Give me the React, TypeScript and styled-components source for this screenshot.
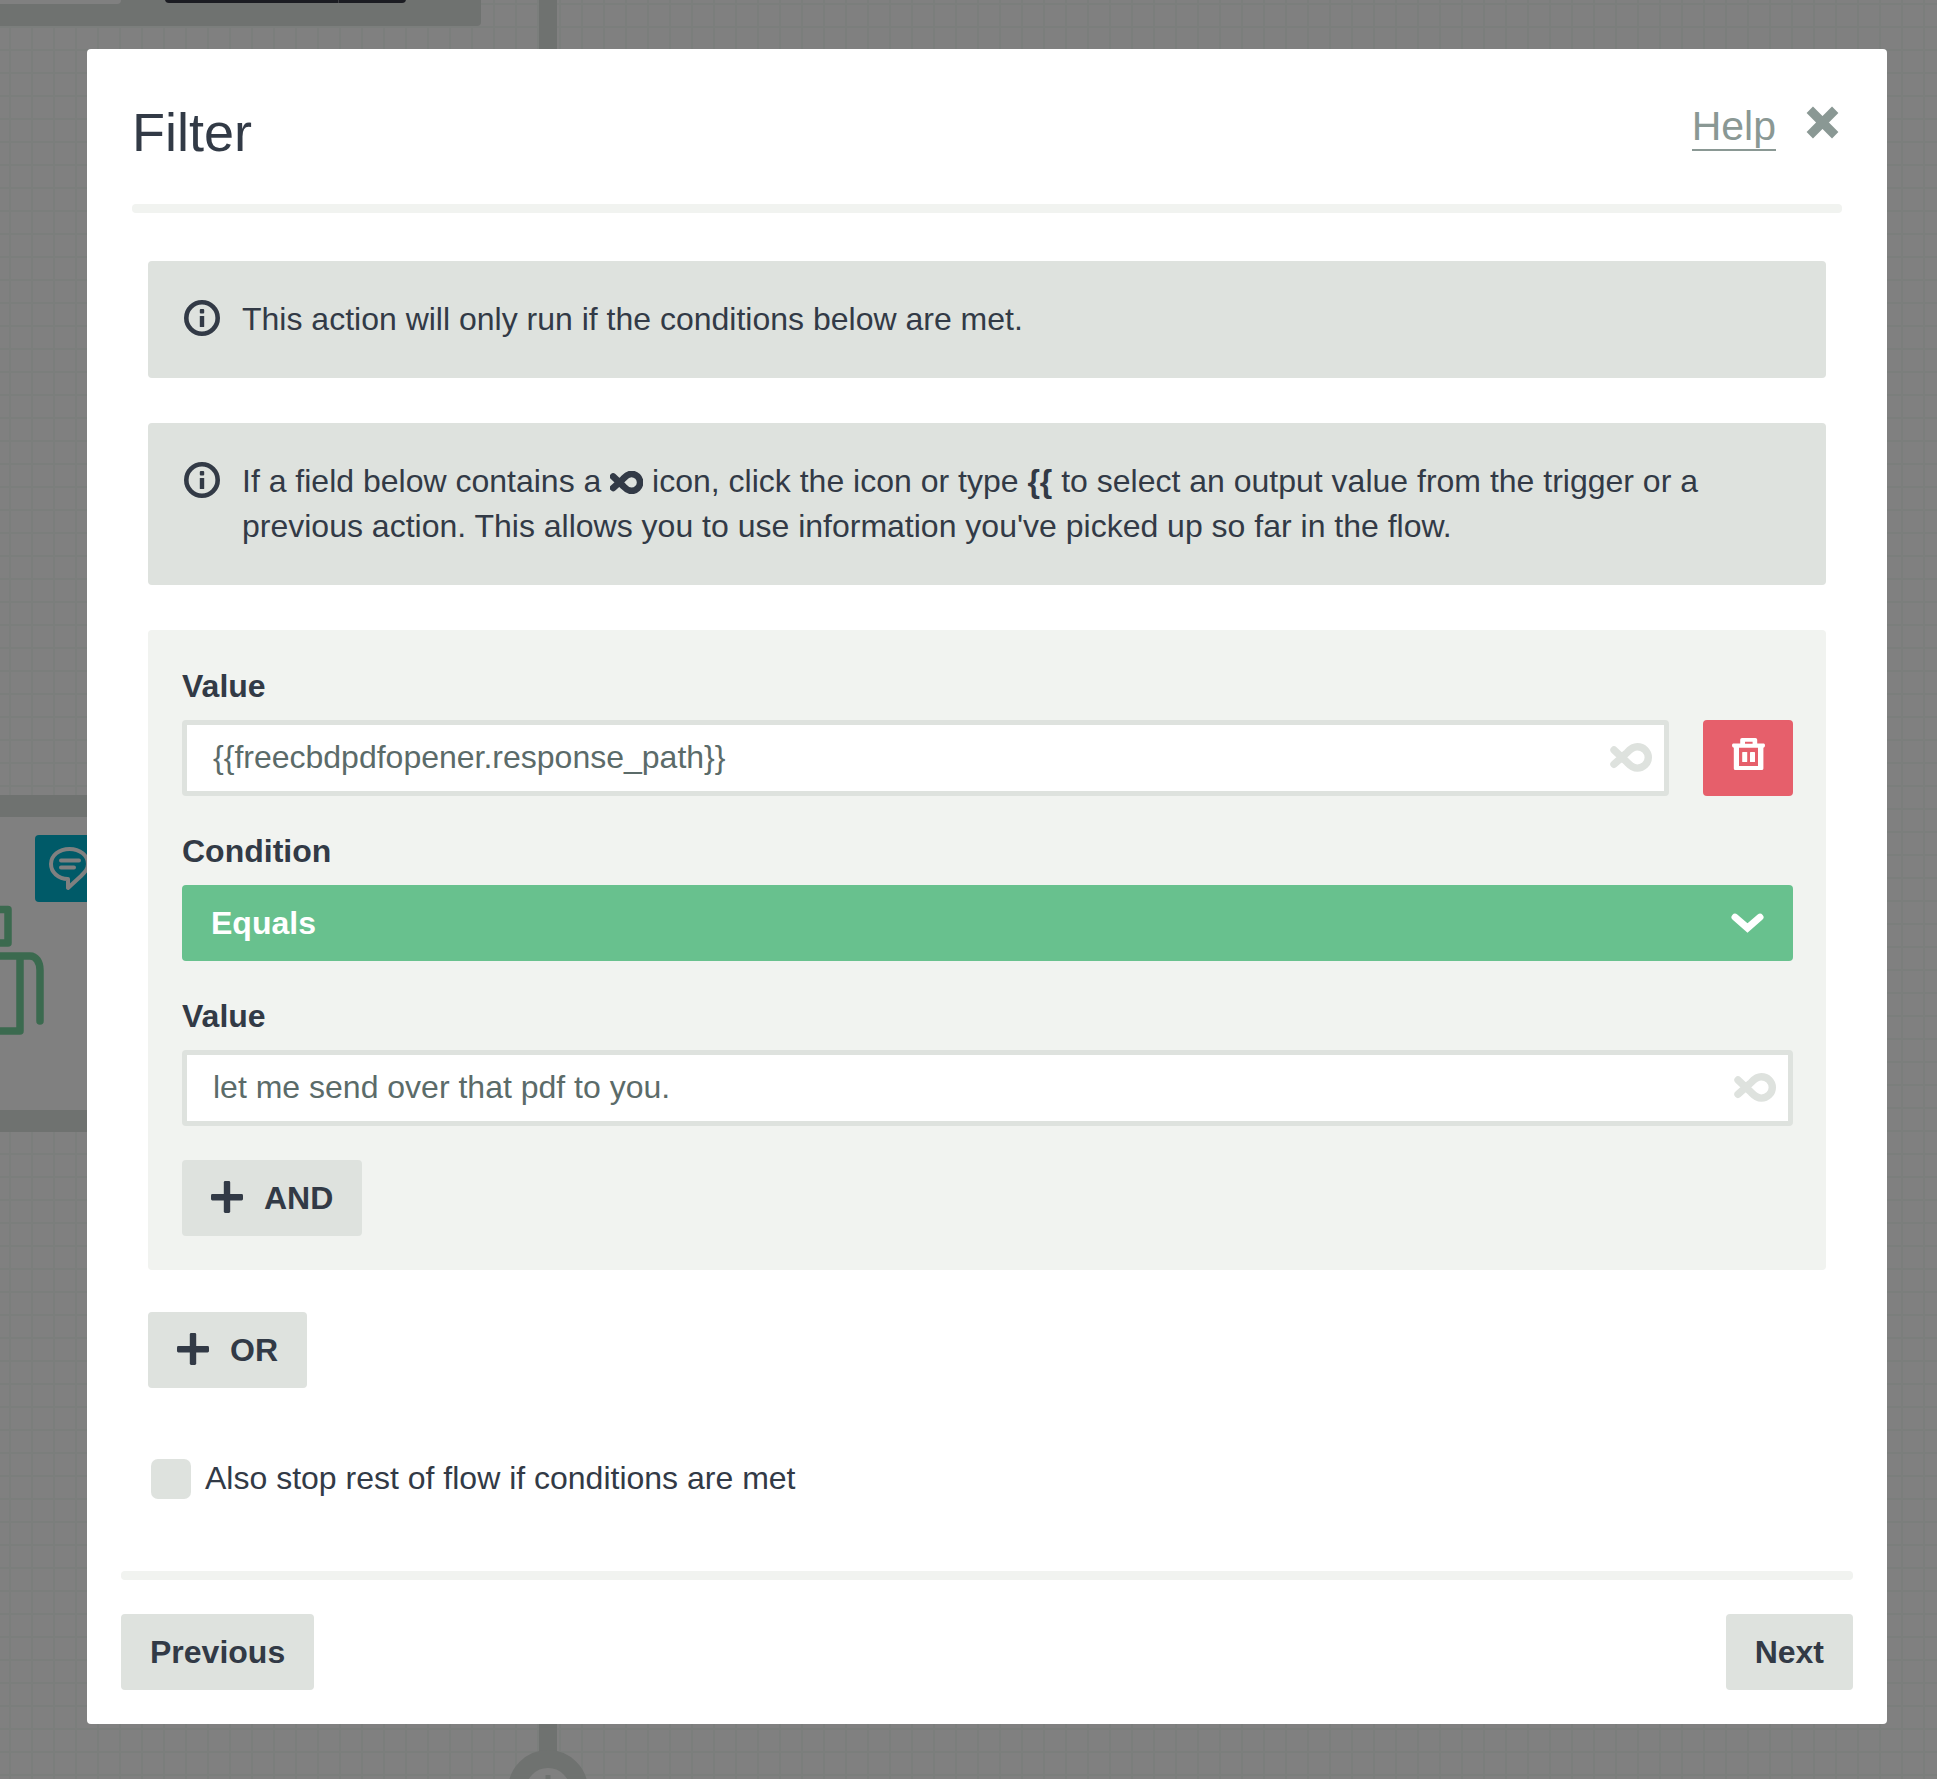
import React, { useState } from "react";
import styled, { createGlobalStyle } from "styled-components";

const ink = "#323a46";
const muted = "#8a9894";
const soft = "#dee2de";
const pale = "#f1f3f0";

const GlobalStyle = createGlobalStyle`
  *, *::before, *::after { box-sizing: border-box; }
  body {
    margin: 0;
    font-family: "Liberation Sans", Arial, sans-serif;
    font-size: 32px;
    line-height: 45px;
    color: ${ink};
    background: #808080;
  }
`;

const Page = styled.div`
  position: relative;
  display: flow-root;
  min-height: 100vh;
`;

/* Dimmed flow builder behind the dialog */
const Canvas = styled.div`
  position: absolute;
  inset: 0;
  overflow: hidden;
  background-color: #808080;
  background-image: linear-gradient(to right, #7b7e7c 2px, transparent 2px),
    linear-gradient(to bottom, #7b7e7c 2px, transparent 2px);
  background-size: 22px 23px;
  background-position: 9px 3px;
`;

const Connector = styled.div`
  position: absolute;
  left: 539px;
  top: 0;
  width: 18px;
  height: 1760px;
  background: #6f7270;
`;

const TopNode = styled.div`
  position: absolute;
  left: -20px;
  top: -200px;
  width: 501px;
  height: 226px;
  border-radius: 4px;
  background: #6f7270;
`;

const TopCard = styled.div`
  position: absolute;
  left: 0;
  bottom: 22px;
  width: 141px;
  height: 100px;
  border-radius: 4px;
  background: #808080;
`;

const TopAction = styled.div`
  position: absolute;
  left: 185px;
  bottom: 23px;
  display: flex;
  width: 241px;
  height: 76px;
  border-radius: 4px;
  background: #1b1c22;

  &::before {
    content: "";
    width: 174px;
    border-right: 1px solid #3c3d42;
  }
`;

const SideNode = styled.div`
  position: absolute;
  left: -22px;
  top: 795px;
  width: 300px;
  height: 337px;
  border: 22px solid #6f7270;
  border-radius: 4px;
  background: #808080;
`;

const Badge = styled.div`
  position: absolute;
  left: 35px;
  top: 18px;
  width: 68px;
  height: 67px;
  border-radius: 4px;
  background: #005a68;
`;

const Robot = styled.svg`
  position: absolute;
  left: 0;
  top: 80px;
`;

const AddStep = styled.svg`
  position: absolute;
  left: 508px;
  top: 1750px;
`;

const Dialog = styled.main`
  position: relative;
  margin: 49px 50px 55px 87px;
  padding: 55px 0 34px;
  border-radius: 4px;
  background: #fff;
`;

const Header = styled.header`
  display: flex;
  justify-content: space-between;
  align-items: flex-start;
  margin: 0 45px;
  padding-bottom: 44px;
`;

const Title = styled.h1`
  margin: 0;
  font-size: 54px;
  line-height: 56px;
  font-weight: 400;
`;

const HeaderActions = styled.div`
  display: flex;
  align-items: flex-start;
  gap: 30px;
  padding-right: 3px;
`;

const HelpLink = styled.a`
  font-size: 41px;
  line-height: 45px;
  color: ${muted};
  text-decoration: none;
  border-bottom: 2px solid ${muted};
`;

const IconButton = styled.button`
  display: flex;
  padding: 0;
  border: 0;
  background: none;
  color: inherit;
  cursor: pointer;
`;

const CloseButton = styled(IconButton)`
  padding-top: 2px;
  color: ${muted};
`;

const Divider = styled.hr<{ $inset: number }>`
  height: 9px;
  margin: 0 ${(p) => p.$inset}px;
  border: 0;
  border-radius: 4px;
  background: ${pale};
`;

const Body = styled.div`
  display: flex;
  flex-direction: column;
  gap: 45px;
  padding: 48px 61px 70px;
`;

const Notice = styled.div`
  display: flex;
  align-items: flex-start;
  gap: 22px;
  padding: 36px;
  border-radius: 4px;
  background: ${soft};

  > svg {
    flex: none;
    margin-top: 3px;
  }

  p {
    margin: 0;
  }
`;

const Rules = styled.div`
  display: flex;
  flex-direction: column;
  align-items: flex-start;
  gap: 42px;
`;

const Panel = styled.section`
  display: flex;
  flex-direction: column;
  align-items: flex-start;
  align-self: stretch;
  gap: 34px;
  padding: 34px 33px 34px 34px;
  border-radius: 4px;
  background: ${pale};
`;

const Fields = styled.div`
  display: flex;
  flex-direction: column;
  align-self: stretch;
  gap: 33px;
`;

const Field = styled.div`
  display: flex;
  flex-direction: column;
  gap: 11px;
`;

const Label = styled.label`
  font-weight: 700;
`;

const Row = styled.div`
  display: flex;
  gap: 34px;
`;

const InputBox = styled.div`
  display: flex;
  flex: 1;
  align-items: center;
  height: 76px;
  padding: 0 12px 2px 0;
  border: 5px solid ${soft};
  border-radius: 4px;
  background: #fff;
  color: ${soft};
`;

const TextInput = styled.input`
  flex: 1;
  min-width: 0;
  height: 64px;
  padding: 0 26px;
  border: 0;
  outline: 0;
  background: none;
  font: inherit;
  color: #5b6b69;
`;

const DeleteButton = styled(IconButton)`
  flex: none;
  justify-content: center;
  width: 90px;
  height: 76px;
  padding-top: 18px;
  border-radius: 4px;
  background: #e65f6b;
  color: #fff;
`;

const SelectBox = styled.div`
  display: grid;
  align-items: center;
  border-radius: 4px;
  background: #68c18e;
  color: #fff;

  > * {
    grid-area: 1 / 1;
  }

  > svg {
    justify-self: end;
    margin-right: 29px;
    pointer-events: none;
  }
`;

const Select = styled.select`
  width: 100%;
  height: 76px;
  padding: 0 29px;
  border: 0;
  outline: 0;
  appearance: none;
  background: none;
  font: inherit;
  font-weight: 700;
  color: inherit;
`;

const Button = styled.button`
  display: flex;
  align-items: center;
  gap: 21px;
  height: 76px;
  padding: 0 29px;
  border: 0;
  border-radius: 4px;
  background: ${soft};
  font: inherit;
  font-weight: 700;
  color: ${ink};
  cursor: pointer;
`;

const Outside = styled.div`
  display: flex;
  flex-direction: column;
  align-items: flex-start;
  gap: 68px;
`;

const CheckLabel = styled.label`
  display: flex;
  align-items: center;
  gap: 14px;
  padding-left: 3px;
`;

const Checkbox = styled.input`
  width: 40px;
  height: 40px;
  margin: 0;
  appearance: none;
  border-radius: 7px;
  background: ${soft};

  &:checked {
    background: #68c18e;
  }
`;

const Footer = styled.footer`
  display: flex;
  justify-content: space-between;
  padding: 34px 34px 0;
`;

const InlineIcon = styled.span`
  svg {
    vertical-align: -2px;
  }
`;

const VariableIcon = ({ width = 42, height = 29, stroke = 7.4 }: { width?: number; height?: number; stroke?: number }) => (
  <svg width={width} height={height} viewBox="0 0 42 29" fill="none" preserveAspectRatio="none" aria-hidden="true">
    <path
      d="M4 21.3 16 10.6C18.800 8 21.500 3.7 27.3 3.7 33.4 3.7 38.3 8.5 38.3 14.4S33.4 25.1 27.3 25.1C21.500 25.1 18.800 20.800 16 18.2L4 7"
      stroke="currentColor"
      strokeWidth={stroke}
      strokeLinecap="round"
    />
  </svg>
);

const InfoIcon = () => (
  <svg width="36" height="36" viewBox="0 0 36 36" aria-hidden="true">
    <circle cx="18" cy="18" r="15.7" fill="none" stroke={ink} strokeWidth="4.6" />
    <rect x="15.8" y="9" width="4.4" height="4.4" rx="1" fill={ink} />
    <rect x="15.8" y="16" width="4.4" height="11" rx="0.6" fill={ink} />
  </svg>
);

const PlusIcon = () => (
  <svg width="32" height="34" viewBox="1 0 32 34" fill="currentColor" aria-hidden="true">
    <rect x="1" y="13" width="32" height="6.4" rx="1.4" />
    <rect x="13.8" y="0" width="6.4" height="32" rx="1.4" />
  </svg>
);

const CloseIcon = () => (
  <svg width="33" height="33" viewBox="0 0 33 33" aria-hidden="true">
    <path d="M3.8 3.8 29.2 29.2M29.2 3.8 3.8 29.2" stroke="currentColor" strokeWidth="9" />
  </svg>
);

const ChevronIcon = () => (
  <svg width="33" height="20" viewBox="0 0 33 20" aria-hidden="true">
    <path d="M4 4.2 16.5 15 29 4.2" fill="none" stroke="currentColor" strokeWidth="7" strokeLinecap="round" />
  </svg>
);

const TrashIcon = () => (
  <svg width="33" height="32" viewBox="0 0 33 32" fill="currentColor" fillRule="evenodd" aria-hidden="true">
    <path d="M10 0H23.4Q25.2 0 25.2 1.8V5.6H31.8Q33 5.6 33 7.4T31.4 9.8V30.4Q31.4 32 29.8 32H3.4Q1.8 32 1.8 30.4V9.8Q0 9.2 0 7.4T1.2 5.6H8.2V1.8Q8.2 0 10 0ZM13 3.8V5.8H20.6V3.8ZM7 9.8V28H26V9.8Z" />
    <rect x="10.2" y="14" width="5" height="10" rx="0.6" />
    <rect x="18" y="14" width="5" height="10" rx="0.6" />
  </svg>
);

const ChatIcon = () => (
  <svg width="68" height="67" viewBox="35 835 68 67" fill="none" stroke="#808080" strokeWidth="4" strokeLinecap="round" strokeLinejoin="round" aria-hidden="true">
    <path d="M68 888V879C58 879 51 872 51 864 51 855.5 59 849 69.5 849S88 855.5 88 864C88 869 85 872 81 876L68 888Z" />
    <path d="M61 860.5H79M61 867.5H74" />
  </svg>
);

export default function App() {
  const [first, setFirst] = useState("{{freecbdpdfopener.response_path}}");
  const [second, setSecond] = useState("let me send over that pdf to you.");

  return (
    <Page>
      <GlobalStyle />
      <Canvas aria-hidden="true">
        <Connector />
        <TopNode>
          <TopCard />
          <TopAction />
        </TopNode>
        <SideNode>
          <Robot width="60" height="150" viewBox="0 897 60 150" fill="none" stroke="#3b6a4f" strokeWidth="7.5" strokeLinecap="round" strokeLinejoin="round">
            <path d="M-20 909.5H8V943H-20M-20 956H30C36 956 40 962 40 970V1021M20 956V1031H-20" />
          </Robot>
          <Badge>
            <ChatIcon />
          </Badge>
        </SideNode>
        <AddStep width="80" height="80" viewBox="0 0 80 80">
          <circle cx="40" cy="40" r="31" fill="#808080" stroke="#6f7270" strokeWidth="18" />
          <path d="M40 25V55M25 40H55" stroke="#6f7270" strokeWidth="5" />
        </AddStep>
      </Canvas>

      <Dialog role="dialog" aria-labelledby="dialog-title">
        <Header>
          <Title id="dialog-title">Filter</Title>
          <HeaderActions>
            <HelpLink href="#help">Help</HelpLink>
            <CloseButton type="button" aria-label="Close">
              <CloseIcon />
            </CloseButton>
          </HeaderActions>
        </Header>
        <Divider $inset={45} />

        <Body>
          <Notice>
            <InfoIcon />
            <p>This action will only run if the conditions below are met.</p>
          </Notice>
          <Notice>
            <InfoIcon />
            <p>
              If a field below contains a{" "}
              <InlineIcon>
                <VariableIcon width={33} height={23} stroke={8.4} />
              </InlineIcon>{" "}
              icon, click the icon or type <b>{"{{"}</b> to select an output value from the trigger or a previous
              action. This allows you to use information you've picked up so far in the flow.
            </p>
          </Notice>

          <Rules>
            <Panel>
              <Fields>
                <Field>
                  <Label htmlFor="value-left">Value</Label>
                  <Row>
                    <InputBox>
                      <TextInput id="value-left" value={first} onChange={(e) => setFirst(e.target.value)} />
                      <IconButton type="button" aria-label="Insert output value">
                        <VariableIcon />
                      </IconButton>
                    </InputBox>
                    <DeleteButton type="button" aria-label="Delete condition">
                      <TrashIcon />
                    </DeleteButton>
                  </Row>
                </Field>
                <Field>
                  <Label htmlFor="condition">Condition</Label>
                  <SelectBox>
                    <Select id="condition" defaultValue="Equals">
                      <option>Equals</option>
                    </Select>
                    <ChevronIcon />
                  </SelectBox>
                </Field>
                <Field>
                  <Label htmlFor="value-right">Value</Label>
                  <InputBox>
                    <TextInput id="value-right" value={second} onChange={(e) => setSecond(e.target.value)} />
                    <IconButton type="button" aria-label="Insert output value">
                      <VariableIcon />
                    </IconButton>
                  </InputBox>
                </Field>
              </Fields>
              <Button type="button">
                <PlusIcon />
                AND
              </Button>
            </Panel>

            <Outside>
              <Button type="button">
                <PlusIcon />
                OR
              </Button>
              <CheckLabel>
                <Checkbox type="checkbox" />
                Also stop rest of flow if conditions are met
              </CheckLabel>
            </Outside>
          </Rules>
        </Body>

        <Divider $inset={34} />
        <Footer>
          <Button type="button">Previous</Button>
          <Button type="button">Next</Button>
        </Footer>
      </Dialog>
    </Page>
  );
}
